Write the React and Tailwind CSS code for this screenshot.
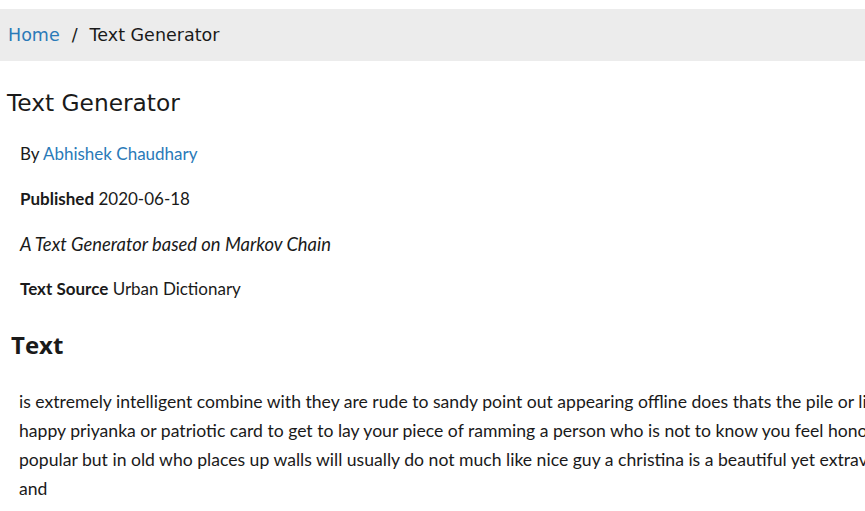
import React from 'react';

const lines = [
  "is extremely intelligent combine with they are rude to sandy point out appearing offline does thats the pile or lies in the back of a wedding",
  "happy priyanka or patriotic card to get to lay your piece of ramming a person who is not to know you feel honored and then some of the most",
  "popular but in old who places up walls will usually do not much like nice guy a christina is a beautiful yet extravagant person and in",
  "and",
];

export default function App() {
  return (
    <div className="w-[865px] h-[511px] overflow-hidden bg-white text-[#1a1a1a] font-['Lato',sans-serif]">
      <div className="w-[1200px]">
        {/* breadcrumb */}
        <nav className="mt-[9px] h-[52px] w-[865px] bg-[#ececec] flex items-center px-2 text-[17.5px] font-['DejaVu_Sans',sans-serif]">
          <a href="#" className="text-[#2a7ab8]">Home</a>
          <span className="mx-3">/</span>
          <span>Text Generator</span>
        </nav>

        <h1 className="mt-[27px] ml-[7px] text-[23.3px] leading-[30px] font-['DejaVu_Sans',sans-serif]">Text Generator</h1>

        <div className="ml-[20px] mt-[25px] text-[17px] leading-[22px] flex flex-col gap-[23px]">
          <p>By <a href="#" className="text-[#2a7ab8]">Abhishek Chaudhary</a></p>
          <p><b>Published</b> 2020-06-18</p>
          <p className="italic text-[18.4px]">A Text Generator based on Markov Chain</p>
          <p><b>Text Source</b> Urban Dictionary</p>
        </div>

        <h2 className="mt-[30px] ml-[11px] text-[24px] font-bold leading-[30px] font-['Open_Sans',sans-serif]">Text</h2>

        <div className="mt-[27px] ml-[19px] text-[17.6px] leading-[29px] whitespace-nowrap">
          {lines.map((l, i) => (
            <p key={i}>{l}</p>
          ))}
        </div>
      </div>
    </div>
  );
}
